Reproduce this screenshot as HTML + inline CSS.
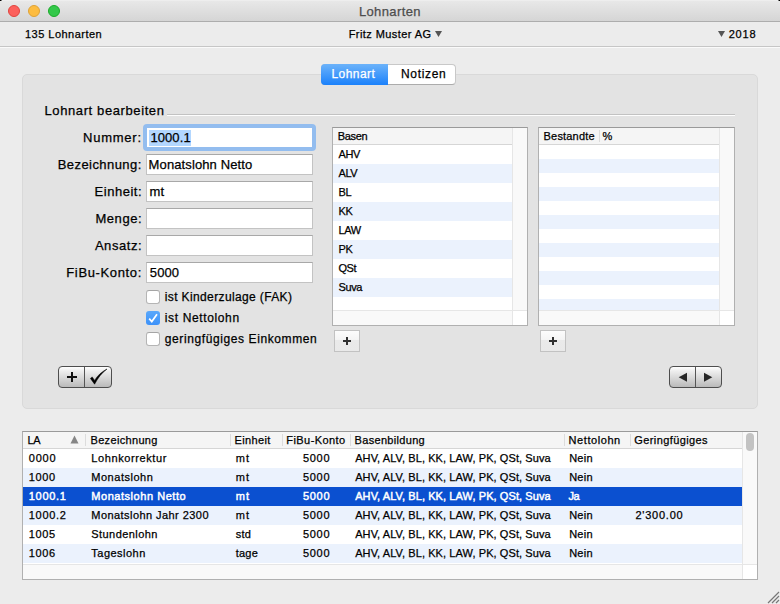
<!DOCTYPE html>
<html><head><meta charset="utf-8">
<style>
*{margin:0;padding:0;box-sizing:border-box}
html,body{width:780px;height:604px;overflow:hidden;background:#ececec}
body{position:relative;font-family:"Liberation Sans",sans-serif;color:#000}
.a{position:absolute}
.t{position:absolute;white-space:nowrap;line-height:1;-webkit-text-stroke:0.25px currentColor}
.corner{position:absolute;top:0;width:2px;height:1px;background:linear-gradient(90deg,#000 50%,#777 50%)}
.tl{position:absolute;top:5px;width:12px;height:12px;border-radius:50%}
.fld{position:absolute;left:146px;width:167px;height:21px;background:#fff;border:1px solid #c3c3c3;border-top-color:#a8a8a8}
.cb{position:absolute;left:146px;width:14px;height:14px;background:#fff;border:1px solid #b5b5b5;border-top-color:#a5a5a5;border-radius:3px}
.tbl{position:absolute;background:#fff;border:1px solid #b0b0b0;border-top-color:#9a9a9a}
.hdr{position:absolute;left:0;top:0;height:17px;background:#f5f5f5;border-bottom:1px solid #d6d6d6}
.row{position:absolute;left:0;height:19px}
.band{background:#ebf2fd}
.pbtn{position:absolute;width:26px;height:22px;border:1px solid #c2c2c2;background:linear-gradient(#fcfcfc,#f4f4f4 45%,#eaeaea 45%,#e9e9e9)}
.seg2{position:absolute;height:22px;border:1px solid #4e4e4e;border-radius:4px;background:linear-gradient(#ffffff,#eeeeee 20%,#bababa)}
.vd{position:absolute;top:2px;width:1px;height:12px;background:#dcdcdc}
.scv{position:absolute;top:0;width:15px;background:#f9f9f9;border-left:1px solid #e6e6e6}
.sch{position:absolute;left:0;height:15px;background:#f9f9f9;border-top:1px solid #e6e6e6}
.scc{position:absolute;width:15px;height:15px;background:#fff;border-top:1px solid #e6e6e6;border-left:1px solid #e6e6e6}
</style></head><body>

<!-- title bar -->
<div class="a" style="left:0;top:0;width:780px;height:22px;background:linear-gradient(#f4f4f4,#e8e8e8 1px,#d5d5d5);border-bottom:1px solid #adadad"></div>
<div class="corner" style="left:0"></div>
<div class="corner" style="right:0;transform:scaleX(-1)"></div>
<div class="tl" style="left:8px;background:#fc605c;border:1px solid #e0443e"></div>
<div class="tl" style="left:28px;background:#fdbc40;border:1px solid #dea236"></div>
<div class="tl" style="left:48px;background:#34c84a;border:1px solid #1aab29"></div>

<!-- toolbar -->
<div class="a" style="left:0;top:46px;width:780px;height:1px;background:#c6c6c6"></div>
<div class="a" style="left:0;top:47px;width:780px;height:1px;background:#fafafa"></div>
<svg class="a" style="left:434px;top:30px" width="9" height="8"><path d="M1 1H8L4.5 7Z" fill="#555"/></svg>
<svg class="a" style="left:717px;top:30px" width="9" height="8"><path d="M1 1H8L4.5 7Z" fill="#555"/></svg>

<!-- panel -->
<div class="a" style="left:22px;top:74px;width:736px;height:335px;background:#e3e3e3;border:1px solid #d9d9d9;border-radius:5px"></div>

<!-- segmented control -->
<div class="a" style="left:321px;top:64px;width:135px;height:21px;border-radius:4px;background:#fff;border:1px solid #c8c8c8;border-bottom-color:#acacac"></div>
<div class="a" style="left:321px;top:64px;width:67px;height:21px;border-radius:4px 0 0 4px;background:linear-gradient(#6cb3fa,#1b81fb)"></div>

<!-- group title separator -->
<div class="a" style="left:167px;top:114px;width:568px;height:1px;background:#c2c2c2"></div>
<div class="a" style="left:167px;top:115px;width:568px;height:1px;background:#fdfdfd"></div>

<!-- fields -->
<div class="a" style="left:143px;top:124px;width:173px;height:27px;border-radius:4px;background:#93bdef"></div>
<div class="a" style="left:147px;top:128px;width:165px;height:19px;background:#fff"></div>
<div class="a" style="left:149px;top:130px;width:42px;height:16px;background:#b3d7ff"></div>
<div class="fld" style="top:154px"></div>
<div class="fld" style="top:181px"></div>
<div class="fld" style="top:208px"></div>
<div class="fld" style="top:235px"></div>
<div class="fld" style="top:262px"></div>

<!-- checkboxes -->
<div class="cb" style="top:290px"></div>
<div class="a" style="left:146px;top:311px;width:14px;height:14px;border-radius:3px;background:linear-gradient(#5aa8fb,#3d92f9)"></div>
<svg class="a" style="left:146px;top:311px" width="14" height="14"><path d="M3.2 7.6L5.8 10.6L11 3.3" fill="none" stroke="#fff" stroke-width="1.7"/></svg>
<div class="cb" style="top:332px"></div>

<!-- + check buttons -->
<div class="seg2" style="left:58px;top:366px;width:54px"></div>
<div class="a" style="left:84px;top:367px;width:1px;height:20px;background:#555"></div>
<div class="a" style="left:67px;top:376px;width:10px;height:2px;background:#111"></div>
<div class="a" style="left:71px;top:372px;width:2px;height:10px;background:#111"></div>
<svg class="a" style="left:89px;top:368px" width="20" height="18"><path d="M1.4 10.4L3.2 8.9L5.6 12.4C8.5 7.5 13 3.5 18 1C12.5 5 9 10 5.6 16.2Z" fill="#000" stroke="#000" stroke-width="0.5" stroke-linejoin="round"/></svg>

<!-- arrows -->
<div class="seg2" style="left:669px;top:366px;width:53px"></div>
<div class="a" style="left:695px;top:367px;width:1px;height:20px;background:#555"></div>
<svg class="a" style="left:678px;top:372px" width="10" height="10"><path d="M9 0.7V9.8L0.7 5.25Z" fill="#262626"/></svg>
<svg class="a" style="left:704px;top:372px" width="10" height="10"><path d="M0 0.7V9.8L8.3 5.25Z" fill="#262626"/></svg>

<!-- Basen table -->
<div class="tbl" style="left:332px;top:127px;width:196px;height:199px">
 <div class="hdr" style="width:180px"></div>
 <div class="row band" style="top:36px;width:180px"></div>
 <div class="row band" style="top:74px;width:180px"></div>
 <div class="row band" style="top:112px;width:180px"></div>
 <div class="row band" style="top:150px;width:180px"></div>
 <div class="scv" style="left:179px;height:182px"></div>
 <div class="sch" style="top:182px;width:180px"></div>
 <div class="scc" style="left:179px;top:182px"></div>
</div>
<div class="pbtn" style="left:334px;top:330px"></div>
<div class="a" style="left:343px;top:340px;width:8px;height:2px;background:#303030"></div>
<div class="a" style="left:346px;top:337px;width:2px;height:8px;background:#303030"></div>

<!-- Bestandte table -->
<div class="tbl" style="left:538px;top:127px;width:197px;height:199px">
 <div class="hdr" style="width:181px"></div>
 <div class="vd" style="left:60px"></div>
 <div class="row band" style="top:31px;width:181px;height:14px"></div>
 <div class="row band" style="top:59px;width:181px;height:14px"></div>
 <div class="row band" style="top:87px;width:181px;height:14px"></div>
 <div class="row band" style="top:115px;width:181px;height:14px"></div>
 <div class="row band" style="top:143px;width:181px;height:14px"></div>
 <div class="row band" style="top:171px;width:181px;height:11px"></div>
 <div class="scv" style="left:180px;height:182px"></div>
 <div class="sch" style="top:182px;width:181px"></div>
 <div class="scc" style="left:180px;top:182px"></div>
</div>
<div class="pbtn" style="left:540px;top:330px"></div>
<div class="a" style="left:549px;top:340px;width:8px;height:2px;background:#303030"></div>
<div class="a" style="left:552px;top:337px;width:2px;height:8px;background:#303030"></div>

<!-- bottom table -->
<div class="tbl" style="left:22px;top:431px;width:736px;height:149px">
 <div class="hdr" style="width:719px"></div>
 <svg class="a" style="left:47px;top:3px" width="10" height="9"><path d="M0.5 8.5H8.5L4.5 0.5Z" fill="#858585"/></svg>
 <div class="vd" style="left:62px"></div>
 <div class="vd" style="left:207px"></div>
 <div class="vd" style="left:259px"></div>
 <div class="vd" style="left:327px"></div>
 <div class="vd" style="left:541px"></div>
 <div class="vd" style="left:607px"></div>
 <div class="row band" style="top:36px;width:719px"></div>
 <div class="row" style="top:55px;width:719px;background:#0b50d0"></div>
 <div class="row band" style="top:74px;width:719px"></div>
 <div class="row band" style="top:112px;width:719px"></div>
 <div class="scv" style="left:719px;height:132px"></div>
 <div class="a" style="left:723px;top:1px;width:8px;height:18px;border-radius:4px;background:#c3c3c3"></div>
 <div class="sch" style="top:132px;width:720px"></div>
 <div class="scc" style="left:719px;top:132px"></div>
</div>
<svg class="a" style="left:766px;top:590px" width="14" height="14"><path d="M2 13L13 2M6 13L13 6M10 13L13 10" stroke="#777" stroke-width="1.2"/></svg>

<div class="t" style="left:358.90px;top:5px;font-size:13px;letter-spacing:0.385px;color:#4d4d4d">Lohnarten</div>
<div class="t" style="left:25.00px;top:29px;font-size:11px;letter-spacing:0.472px">135 Lohnarten</div>
<div class="t" style="left:348.70px;top:29px;font-size:11px;letter-spacing:0.418px">Fritz Muster AG</div>
<div class="t" style="left:728.70px;top:29px;font-size:11px;letter-spacing:0.816px">2018</div>
<div class="t" style="left:331.40px;top:68px;font-size:12px;letter-spacing:0.456px;color:#fff">Lohnart</div>
<div class="t" style="left:401.00px;top:68px;font-size:12px;letter-spacing:0.664px">Notizen</div>
<div class="t" style="left:44.50px;top:104px;font-size:13px;letter-spacing:0.605px">Lohnart bearbeiten</div>
<div class="t" style="left:83.00px;top:131px;font-size:13px;letter-spacing:0.761px">Nummer:</div>
<div class="t" style="left:57.70px;top:158px;font-size:13px;letter-spacing:0.439px">Bezeichnung:</div>
<div class="t" style="left:94.50px;top:185px;font-size:13px;letter-spacing:0.536px">Einheit:</div>
<div class="t" style="left:95.40px;top:212px;font-size:13px;letter-spacing:0.570px">Menge:</div>
<div class="t" style="left:94.90px;top:239px;font-size:13px;letter-spacing:0.560px">Ansatz:</div>
<div class="t" style="left:66.30px;top:266px;font-size:13px;letter-spacing:0.637px">FiBu-Konto:</div>
<div class="t" style="left:150.40px;top:131px;font-size:13px;letter-spacing:0.094px">1000.1</div>
<div class="t" style="left:148.60px;top:158px;font-size:13px;letter-spacing:0.116px">Monatslohn Netto</div>
<div class="t" style="left:149.60px;top:185px;font-size:13px">mt</div>
<div class="t" style="left:149.80px;top:266px;font-size:13px;letter-spacing:0.103px">5000</div>
<div class="t" style="left:164.80px;top:291px;font-size:12px;letter-spacing:0.372px">ist Kinderzulage (FAK)</div>
<div class="t" style="left:164.80px;top:312px;font-size:12px;letter-spacing:0.631px">ist Nettolohn</div>
<div class="t" style="left:164.80px;top:333px;font-size:12px;letter-spacing:0.597px">geringfügiges Einkommen</div>
<div class="t" style="left:337.80px;top:131px;font-size:11px;letter-spacing:-0.350px">Basen</div>
<div class="t" style="left:338.40px;top:149px;font-size:11px;letter-spacing:-0.350px">AHV</div>
<div class="t" style="left:338.40px;top:168px;font-size:11px;letter-spacing:-0.350px">ALV</div>
<div class="t" style="left:338.40px;top:187px;font-size:11px;letter-spacing:-0.350px">BL</div>
<div class="t" style="left:338.40px;top:206px;font-size:11px;letter-spacing:-0.350px">KK</div>
<div class="t" style="left:338.40px;top:225px;font-size:11px;letter-spacing:-0.350px">LAW</div>
<div class="t" style="left:338.40px;top:244px;font-size:11px;letter-spacing:-0.350px">PK</div>
<div class="t" style="left:338.40px;top:263px;font-size:11px;letter-spacing:-0.350px">QSt</div>
<div class="t" style="left:338.40px;top:282px;font-size:11px;letter-spacing:-0.350px">Suva</div>
<div class="t" style="left:543.60px;top:131px;font-size:11px;letter-spacing:0.173px">Bestandte</div>
<div class="t" style="left:602.60px;top:131px;font-size:11px">%</div>
<div class="t" style="left:27.60px;top:435px;font-size:11px;letter-spacing:-0.350px">LA</div>
<div class="t" style="left:90.50px;top:435px;font-size:11px;letter-spacing:0.331px">Bezeichnung</div>
<div class="t" style="left:234.60px;top:435px;font-size:11px;letter-spacing:0.337px">Einheit</div>
<div class="t" style="left:286.30px;top:435px;font-size:11px;letter-spacing:0.432px">FiBu-Konto</div>
<div class="t" style="left:354.60px;top:435px;font-size:11px;letter-spacing:0.314px">Basenbildung</div>
<div class="t" style="left:568.60px;top:435px;font-size:11px;letter-spacing:0.566px">Nettolohn</div>
<div class="t" style="left:634.30px;top:435px;font-size:11px;letter-spacing:0.401px">Geringfügiges</div>
<div class="t" style="left:28.80px;top:453px;font-size:11px;letter-spacing:0.749px">0000</div>
<div class="t" style="left:91.30px;top:453px;font-size:11px;letter-spacing:0.599px">Lohnkorrektur</div>
<div class="t" style="left:235.70px;top:453px;font-size:11px;letter-spacing:1.137px">mt</div>
<div class="t" style="left:302.90px;top:453px;font-size:11px;letter-spacing:0.716px">5000</div>
<div class="t" style="left:355.20px;top:453px;font-size:11px;letter-spacing:0.089px">AHV, ALV, BL, KK, LAW, PK, QSt, Suva</div>
<div class="t" style="left:569.20px;top:453px;font-size:11px;letter-spacing:0.232px">Nein</div>
<div class="t" style="left:28.80px;top:472px;font-size:11px;letter-spacing:0.616px">1000</div>
<div class="t" style="left:91.30px;top:472px;font-size:11px;letter-spacing:0.517px">Monatslohn</div>
<div class="t" style="left:235.70px;top:472px;font-size:11px;letter-spacing:1.137px">mt</div>
<div class="t" style="left:302.90px;top:472px;font-size:11px;letter-spacing:0.716px">5000</div>
<div class="t" style="left:355.20px;top:472px;font-size:11px;letter-spacing:0.089px">AHV, ALV, BL, KK, LAW, PK, QSt, Suva</div>
<div class="t" style="left:569.20px;top:472px;font-size:11px;letter-spacing:0.232px">Nein</div>
<div class="t" style="left:28.80px;top:491px;font-size:11px;letter-spacing:0.675px;color:#fff;-webkit-text-stroke:0.45px #fff">1000.1</div>
<div class="t" style="left:91.30px;top:491px;font-size:11px;letter-spacing:0.540px;color:#fff;-webkit-text-stroke:0.45px #fff">Monatslohn Netto</div>
<div class="t" style="left:235.70px;top:491px;font-size:11px;letter-spacing:1.137px;color:#fff;-webkit-text-stroke:0.45px #fff">mt</div>
<div class="t" style="left:302.90px;top:491px;font-size:11px;letter-spacing:0.716px;color:#fff;-webkit-text-stroke:0.45px #fff">5000</div>
<div class="t" style="left:355.20px;top:491px;font-size:11px;letter-spacing:0.089px;color:#fff;-webkit-text-stroke:0.45px #fff">AHV, ALV, BL, KK, LAW, PK, QSt, Suva</div>
<div class="t" style="left:568.40px;top:491px;font-size:11px;letter-spacing:-0.350px;color:#fff;-webkit-text-stroke:0.45px #fff">Ja</div>
<div class="t" style="left:28.80px;top:510px;font-size:11px;letter-spacing:0.675px">1000.2</div>
<div class="t" style="left:91.30px;top:510px;font-size:11px;letter-spacing:0.440px">Monatslohn Jahr 2300</div>
<div class="t" style="left:235.70px;top:510px;font-size:11px;letter-spacing:1.137px">mt</div>
<div class="t" style="left:302.90px;top:510px;font-size:11px;letter-spacing:0.716px">5000</div>
<div class="t" style="left:355.20px;top:510px;font-size:11px;letter-spacing:0.089px">AHV, ALV, BL, KK, LAW, PK, QSt, Suva</div>
<div class="t" style="left:569.20px;top:510px;font-size:11px;letter-spacing:0.232px">Nein</div>
<div class="t" style="left:635.50px;top:510px;font-size:11px;letter-spacing:0.751px">2'300.00</div>
<div class="t" style="left:28.80px;top:529px;font-size:11px;letter-spacing:0.616px">1005</div>
<div class="t" style="left:91.30px;top:529px;font-size:11px;letter-spacing:0.434px">Stundenlohn</div>
<div class="t" style="left:235.70px;top:529px;font-size:11px;letter-spacing:0.272px">std</div>
<div class="t" style="left:302.90px;top:529px;font-size:11px;letter-spacing:0.716px">5000</div>
<div class="t" style="left:355.20px;top:529px;font-size:11px;letter-spacing:0.089px">AHV, ALV, BL, KK, LAW, PK, QSt, Suva</div>
<div class="t" style="left:569.20px;top:529px;font-size:11px;letter-spacing:0.232px">Nein</div>
<div class="t" style="left:28.80px;top:548px;font-size:11px;letter-spacing:0.616px">1006</div>
<div class="t" style="left:91.30px;top:548px;font-size:11px;letter-spacing:0.483px">Tageslohn</div>
<div class="t" style="left:235.70px;top:548px;font-size:11px;letter-spacing:0.236px">tage</div>
<div class="t" style="left:302.90px;top:548px;font-size:11px;letter-spacing:0.716px">5000</div>
<div class="t" style="left:355.20px;top:548px;font-size:11px;letter-spacing:0.089px">AHV, ALV, BL, KK, LAW, PK, QSt, Suva</div>
<div class="t" style="left:569.20px;top:548px;font-size:11px;letter-spacing:0.232px">Nein</div>
</body></html>
